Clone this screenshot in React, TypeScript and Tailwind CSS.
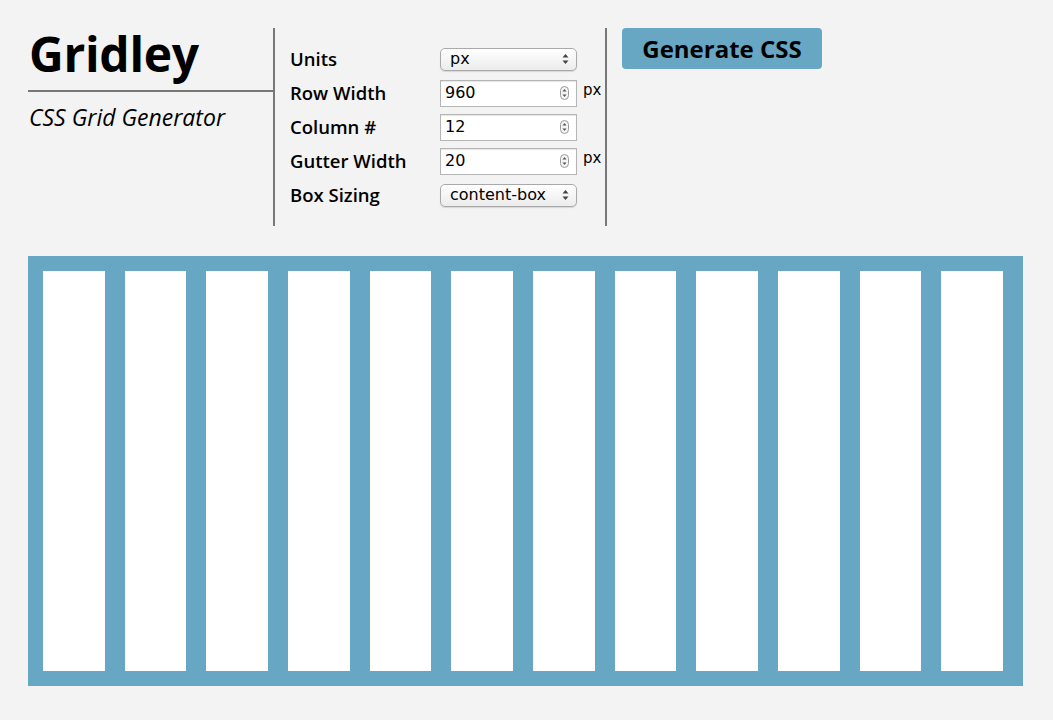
import React from 'react';

const Spinner = () => (
  <svg className="absolute right-[7px] top-1/2 -translate-y-1/2" width="9" height="14" viewBox="0 0 9 14">
    <rect x="0.5" y="0.5" width="8" height="13" rx="4" fill="#f4f4f4" stroke="#9a9a9a" />
    <path d="M4.5 3 L6.5 5.6 L2.5 5.6 Z" fill="#555" />
    <path d="M4.5 11 L6.5 8.4 L2.5 8.4 Z" fill="#555" />
  </svg>
);

const SelectArrows = () => (
  <svg className="absolute right-[7px] top-1/2 -translate-y-1/2" width="7" height="11" viewBox="0 0 7 11">
    <path d="M3.5 0.5 L6.5 4 L0.5 4 Z" fill="#444" />
    <path d="M3.5 10.5 L6.5 7 L0.5 7 Z" fill="#444" />
  </svg>
);

const FakeSelect = ({ value }: { value: string }) => (
  <div className="relative w-[137px] h-[23px] rounded-[5px] border border-[#a9a9a9] bg-gradient-to-b from-white to-[#ececec] shadow-[0_1px_1px_rgba(0,0,0,0.12)] pl-[9px] flex items-center text-[16px] text-black font-['DejaVu_Sans',sans-serif]">
    {value}
    <SelectArrows />
  </div>
);

const NumberInput = ({ value }: { value: string }) => (
  <div className="relative w-[137px] h-[27px] border border-[#b5b5b5] bg-white shadow-[inset_0_1px_1px_rgba(0,0,0,0.1)] pl-[4px] flex items-center text-[16px] text-black font-['DejaVu_Sans',sans-serif]">
    {value}
    <Spinner />
  </div>
);

export default function App() {
  const columns = Array.from({ length: 12 }, (_, i) => i);

  const rows: { label: string; control: React.ReactNode; unit?: string }[] = [
    { label: 'Units', control: <FakeSelect value="px" /> },
    { label: 'Row Width', control: <NumberInput value="960" />, unit: 'px' },
    { label: 'Column #', control: <NumberInput value="12" /> },
    { label: 'Gutter Width', control: <NumberInput value="20" />, unit: 'px' },
    { label: 'Box Sizing', control: <FakeSelect value="content-box" /> },
  ];

  return (
    <div className="min-h-[720px] bg-[#f3f3f3] pt-[28px] px-[28px] font-['Open_Sans',sans-serif] text-black">
      {/* Header */}
      <div className="flex h-[198px]">
        <div className="w-[245px]">
          <h1 className="text-[48px] leading-[48px] font-bold pt-[2px] pb-[12px] pl-[1px] border-b-2 border-[#777] tracking-[-0.3px]">
            Gridley
          </h1>
          <p className="mt-[10px] pl-[1px] text-[23px] leading-[30px] italic font-normal">CSS Grid Generator</p>
        </div>

        <div className="w-[334px] border-l-2 border-r-2 border-[#777] pl-[15px] pt-[14px]">
          {rows.map(row => (
            <div key={row.label} className="flex items-center h-[34px]">
              <span className="w-[150px] text-[18.5px] font-semibold">{row.label}</span>
              {row.control}
              {row.unit && (
                <span className="ml-[6px] text-[15px] font-['DejaVu_Sans',sans-serif] -mt-[6px]">{row.unit}</span>
              )}
            </div>
          ))}
        </div>

        <div className="pl-[15px]">
          <button className="w-[200px] h-[41px] rounded-[4px] bg-[#67a7c4] text-[24px] font-bold leading-none">
            Generate CSS
          </button>
        </div>
      </div>

      {/* Grid preview */}
      <div className="mt-[30px] w-[995px] h-[430px] bg-[#67a7c4] pl-[15px] pr-[20px] py-[15px] flex gap-[20px]">
        {columns.map(c => (
          <div key={c} className="flex-1 bg-white" />
        ))}
      </div>
    </div>
  );
}
